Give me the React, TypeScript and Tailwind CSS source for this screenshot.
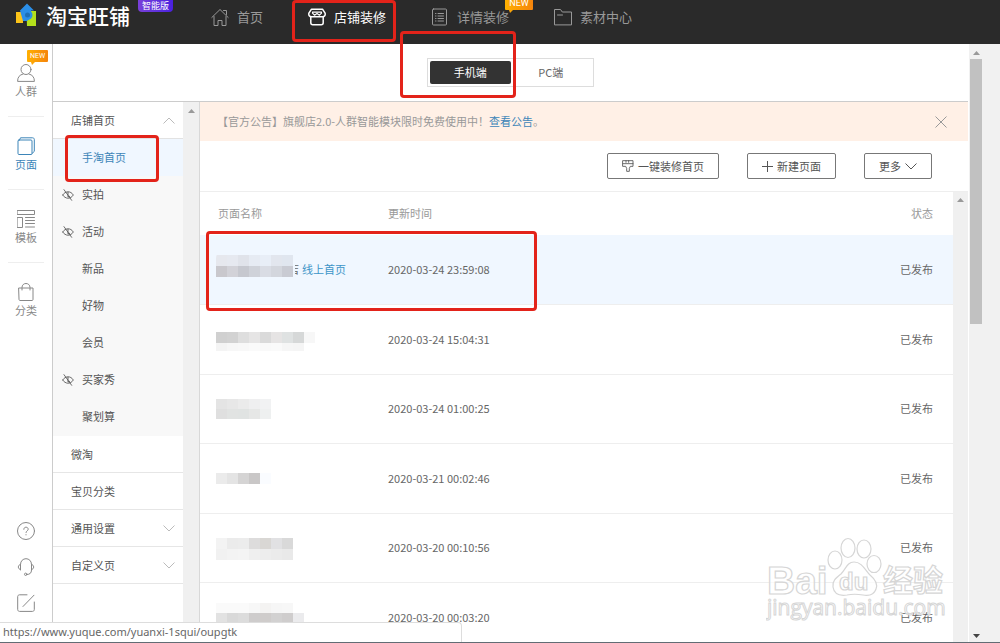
import type { ReactNode } from "react";
import clsx from "clsx";

const navItems = [
  { label: "首页", icon: <HomeIcon /> },
  { label: "店铺装修", icon: <ShopIcon />, active: true },
  { label: "详情装修", icon: <DetailIcon />, isNew: true },
  { label: "素材中心", icon: <FolderIcon /> },
];

const railItems = [
  { label: "人群", icon: <PersonIcon />, isNew: true },
  { label: "页面", icon: <PageIcon />, active: true },
  { label: "模板", icon: <TemplateIcon /> },
  { label: "分类", icon: <BagIcon /> },
];

const subPages = [
  { label: "手淘首页", active: true },
  { label: "实拍", hidden: true },
  { label: "活动", hidden: true },
  { label: "新品" },
  { label: "好物" },
  { label: "会员" },
  { label: "买家秀", hidden: true },
  { label: "聚划算" },
];

const sections = [
  { label: "微淘" },
  { label: "宝贝分类" },
  { label: "通用设置", expandable: true },
  { label: "自定义页", expandable: true },
];

type Band = { y: number; h: number; cells: string[] };

const rows: { time: string; bands: Band[]; home?: boolean }[] = [
  {
    time: "2020-03-24 23:59:08",
    home: true,
    bands: [
      { y: 3, h: 11, cells: ["#e6e8ee", "#e6e9f0", "#e0e3ea", "#e6ebf3", "#e8eef7", "#e2e6ee", "#e0e6ef"] },
      { y: 14, h: 11, cells: ["#c9c8cd", "#d2d2d8", "#c6c8cf", "#cfd2d9", "#d9dce4", "#d3d6dd", "#c9cbd3"] },
    ],
  },
  {
    time: "2020-03-24 15:04:31",
    bands: [
      { y: 10, h: 11, cells: ["#d0d0d0", "#d2d2d2", "#dedede", "#e6e5e5", "#dadada", "#e6e4e4", "#dfe2e2", "#d6d8d8", "#f7f7f7"] },
      { y: 21, h: 8, cells: ["#f4f4f4", "#f7f7f7", "#f8f8f8", "#fafafa", "#f9f9f9", "#fafafa", "#f6f6f6", "#f5f5f5"] },
    ],
  },
  {
    time: "2020-03-24 01:00:25",
    bands: [
      { y: 7, h: 10, cells: ["#e4e4e4", "#e7e7e7", "#ebebeb", "#efeff0", "#f1f2f3"] },
      { y: 17, h: 10, cells: ["#dfdfdf", "#e1e3e2", "#e0e3e2", "#e6e7e6", "#eef0f0"] },
    ],
  },
  {
    time: "2020-03-21 00:02:46",
    bands: [{ y: 12, h: 11, cells: ["#ebebeb", "#e4e4e4", "#d5d4d4", "#c9c7c7", "#fafcff"] }],
  },
  {
    time: "2020-03-20 00:10:56",
    bands: [
      { y: 7, h: 11, cells: ["#f3f3f3", "#ebebeb", "#ececec", "#dddcdc", "#d9d7d4", "#e1e1e3", "#d9d9d9"] },
      { y: 18, h: 11, cells: ["#f1f1f1", "#f3f3f3", "#f4f4f4", "#efefef", "#ededed", "#ebebeb", "#e9e9e9"] },
    ],
  },
  {
    time: "2020-03-20 00:03:20",
    bands: [
      { y: 3, h: 10, cells: ["#fafafa", "#fafafa", "#fafafa", "#f7f7f7", "#f4f3f2", "#f6f6f6", "#f7f7f7"] },
      { y: 13, h: 11, cells: ["#e2e2e2", "#d9d9d9", "#dcdcdc", "#cecccc", "#cfcccb", "#d2d1d1", "#cfcdcd", "#ebebed"] },
    ],
  },
];

function Icon({ children, size = 18 }: { children: ReactNode; size?: number }) {
  return (
    <svg
      width={size}
      height={size}
      viewBox="0 0 18 18"
      fill="none"
      stroke="currentColor"
      strokeWidth="1"
      strokeLinecap="round"
      strokeLinejoin="round"
      className="shrink-0"
      aria-hidden="true"
    >
      {children}
    </svg>
  );
}

function HomeIcon() {
  return (
    <Icon>
      <path d="M.8 9.500 9 1.500l8.200 8M3 8.500V17.500h4v-5h4v5h4v-9M12.500 2.500h3v4" />
    </Icon>
  );
}

function ShopIcon() {
  return (
    <Icon>
      <g strokeWidth="1.500">
        <path d="M3.500 1.200h11l2.600 4c.5 2-.6 3.600-2.600 3.600h-11C1.500 8.800.4 7.200.9 5.200z" />
        <path d="M4.500 4.200h9M4.500 5.200l2 2 2.500-1.800 2.500 1.800 2-2" strokeWidth="1.200" />
        <path d="M2.800 9v5.700c0 1.200.8 2 2 2h8.400c1.200 0 2-.8 2-2V9" />
      </g>
    </Icon>
  );
}

function DetailIcon() {
  return (
    <Icon>
      <rect x="1.500" y="1" width="14" height="16" rx="1" />
      <path d="M4.500 5.500h.5M7 5.500h5.500M4.500 8h.5M7 8h5.500M4.500 10.500h.5M7 10.500h5.500M4.500 13h.5M7 13h5.500" />
    </Icon>
  );
}

function FolderIcon() {
  return (
    <Icon>
      <path d="M.5 16.500v-15h6l1.800 2.500h9.200v12.500zM3.500 7h5" />
    </Icon>
  );
}

function PersonIcon() {
  return (
    <Icon>
      <circle cx="9" cy="5.500" r="5" />
      <path d="M6 10C2.500 11 .6 13 .6 17.400h16.800C17.400 13 15.500 11 12 10" />
    </Icon>
  );
}

function PageIcon() {
  return (
    <Icon>
      <rect x="1" y="3" width="14" height="14.500" rx="1" />
      <path d="M2.500 3 3.500.8h12c1 0 1.800.6 1.800 1.600v12L15 16.500" />
    </Icon>
  );
}

function TemplateIcon() {
  return (
    <Icon>
      <path d="M.5.500h17v4H.5zM.5 7.500h5v10h-5zM8.500 7.500h9M8.500 10.500h9M8.500 13.500h9M8.500 17h9" />
    </Icon>
  );
}

function BagIcon() {
  return (
    <Icon>
      <path d="M2 5h14v11.500c0 .6-.4 1-1 1H3c-.6 0-1-.4-1-1zM5 7V4.500C5 2 6.800.5 9 .5s4 1.500 4 4V7" />
    </Icon>
  );
}

function HelpIcon() {
  return (
    <Icon>
      <circle cx="9" cy="9" r="8.500" />
      <path d="M6.800 7.300c0-1.300 1-2.100 2.200-2.100s2.200.8 2.200 2c0 1.600-2.200 1.700-2.200 3.300M9 12.600v.3" />
    </Icon>
  );
}

function HeadsetIcon() {
  return (
    <Icon>
      <path d="M3.500 12V6.500C3.500 3 6 .7 9 .7s5.500 2.300 5.500 5.800V12c0 3-1.700 4.500-4.500 4.500" />
      <path d="M3.500 6.500C.5 6.500.5 11.500 3.500 11.500M14.500 6.500c3 0 3 5 0 5" />
      <circle cx="8.700" cy="16.300" r="1.200" />
    </Icon>
  );
}

function EditIcon() {
  return (
    <Icon>
      <path d="M10 .8H2.500c-1 0-1.800.8-1.800 1.800v13c0 1 .8 1.800 1.800 1.800h13c1 0 1.800-.8 1.800-1.800V8M6 12.500 17 1.200" />
    </Icon>
  );
}

function EyeOffIcon() {
  return (
    <Icon size={12}>
      <g strokeWidth="1.300">
        <path d="M1 9c4-6.500 12-6.500 16 0-4 6.500-12 6.500-16 0M3 1l11.500 16" />
        <path d="M9 5v7l2.500-1" />
      </g>
    </Icon>
  );
}

function BrushIcon() {
  return (
    <Icon size={12}>
      <path d="M1.500 1h15v8.500h-4L11 12.500V17H7v-4.500L5.500 9.500h-4zM1.500 5.500h15M6 1v2.500M10 1v2.500" strokeWidth="1.300" />
    </Icon>
  );
}

function Chevron({ up }: { up?: boolean }) {
  return (
    <svg width="12" height="7" viewBox="0 0 12 7" fill="none" stroke="currentColor" aria-hidden="true">
      <path d={up ? "M.5 6.500 6 1l5.500 5.500" : "M.5.500 6 6 11.500.500"} />
    </svg>
  );
}

function Arrow({ down, className }: { down?: boolean; className?: string }) {
  return (
    <svg width="7" height="4" viewBox="0 0 7 4" fill="currentColor" className={className} aria-hidden="true">
      <path d={down ? "M0 0h7L3.500 4z" : "M0 4h7L3.500 0z"} />
    </svg>
  );
}

function NewBadge({ className }: { className: string }) {
  return (
    <span
      className={clsx(
        "absolute flex items-center justify-center rounded-[1px] bg-linear-to-r from-[#ffb000] to-[#f5840c] font-[Roboto] text-white",
        className,
      )}
    >
      NEW
      <svg width="4" height="3" viewBox="0 0 4 3" className="absolute top-full left-1" aria-hidden="true">
        <path d="M0 0h4L1 3z" fill="#fba508" />
      </svg>
    </span>
  );
}

function Mark({ className }: { className: string }) {
  return (
    <span
      className={clsx("pointer-events-none absolute z-10 rounded border-3 border-[#e3231a]", className)}
      aria-hidden="true"
    />
  );
}

function Logo() {
  return (
    <svg width="22" height="24" viewBox="0 0 22 24" aria-hidden="true">
      <path d="M0 9h7v11H0z" fill="#fcc419" />
      <path d="M10.500 8H20v15h-9z" fill="#b4e01c" />
      <path d="M4 7.500 11 .500l7 7H15v7L11 18H7z" fill="#2b8fe8" />
      <circle cx="11.500" cy="12" r="5" fill="#2b8fe8" />
      <circle cx="11.500" cy="12" r="2.500" fill="#1f6fb5" />
    </svg>
  );
}

function Mosaic({ bands }: { bands: Band[] }) {
  return (
    <svg width="100" height="34" viewBox="0 0 100 34" shapeRendering="crispEdges" aria-hidden="true">
      {bands.map((band) =>
        band.cells.map((fill, i) => (
          <rect key={`${band.y}-${i}`} x={i * 11} y={band.y} width="11" height={band.h} fill={fill} />
        )),
      )}
    </svg>
  );
}

function Watermark() {
  return (
    <svg
      width="180"
      height="90"
      viewBox="0 0 180 90"
      className="pointer-events-none absolute right-[22px] bottom-4"
      fill="#ffffff"
      fillOpacity="0.700"
      stroke="#d6d6d6"
      strokeWidth="1.200"
      aria-hidden="true"
    >
      <ellipse cx="69" cy="24" rx="7" ry="9" />
      <ellipse cx="82" cy="12" rx="7" ry="9.500" />
      <ellipse cx="98" cy="13" rx="7" ry="9" />
      <ellipse cx="108" cy="28" rx="7" ry="8.500" />
      <path d="M88 26c8 0 11 8 16 13 6 5 8 9 6 14-2 6-8 7-13 6-6-1-11-1-16 0-7 1-13-1-14-8-1-6 3-9 8-13 5-5 6-12 13-12z" />
      <g className="font-['Liberation_Sans'] font-bold">
        <text x="1" y="58" fontSize="39">Bai</text>
        <text x="73" y="54" fontSize="24">du</text>
      </g>
      <text x="117" y="55" fontSize="30" className="font-['Noto_Sans_CJK_SC'] font-bold">经验</text>
      <text x="1" y="79" fontSize="21" strokeWidth="1" className="font-['Open_Sans']">jingyan.baidu.com</text>
    </svg>
  );
}

function Header() {
  return (
    <header className="flex h-11 shrink-0 items-start bg-[#2a2a2a] pl-4 text-[#999]">
      <div className="flex w-[195px] shrink-0 items-center">
        <Logo />
        <span className="ml-2 text-[21px] leading-[30px] font-medium text-white">淘宝旺铺</span>
        <span className="ml-2 flex h-3 w-[35px] items-center justify-center self-start rounded-b-sm bg-linear-to-r from-[#7a3fd8] to-[#4a1fe0] text-[9px] text-white">
          智能版
        </span>
      </div>
      <nav className="flex gap-[45px]">
        {navItems.map((item) => (
          <a
            key={item.label}
            href="#"
            className={clsx(
              "relative flex h-[34px] items-center gap-2 text-[13px] whitespace-nowrap",
              item.active && "text-white",
            )}
          >
            {item.icon}
            {item.label}
            {item.isNew && <NewBadge className="-top-0.5 -right-6 h-3 w-7 text-[9px]" />}
            {item.active && <Mark className="top-0 -right-2.5 -bottom-2 -left-4" />}
          </a>
        ))}
      </nav>
    </header>
  );
}

function Rail() {
  return (
    <aside className="flex w-[53px] shrink-0 flex-col items-center border-r border-[#ccc] text-[11px] text-[#888]">
      {railItems.map((item) => (
        <a
          key={item.label}
          href="#"
          className={clsx(
            "relative flex w-9 flex-col items-center border-b border-[#eee] pt-5 pb-4 leading-[18px] last-of-type:border-0",
            item.active && "text-[#3d85b8]",
          )}
        >
          {item.icon}
          {item.label}
          {item.isNew && <NewBadge className="top-1.5 -right-1 h-3 w-[21px] text-[7px]" />}
        </a>
      ))}
      <div className="mt-auto flex flex-col gap-[18px] pb-[30px]">
        <button type="button" aria-label="帮助"><HelpIcon /></button>
        <button type="button" aria-label="客服"><HeadsetIcon /></button>
        <button type="button" aria-label="反馈"><EditIcon /></button>
      </div>
    </aside>
  );
}

function PageTree() {
  return (
    <div className="flex shrink-0 border-r border-[#d8d8d8]">
      <nav className="w-[130px] text-[11px] text-[#555]">
        <button
          type="button"
          className="flex h-[37px] w-full items-center justify-between border-b border-[#e2e2e2] pr-2 pl-[18px]"
        >
          店铺首页
          <span className="text-[#bbb]"><Chevron up /></span>
        </button>
        <ul className="bg-[#f8f8f8] pb-px">
          {subPages.map((page) => (
            <li key={page.label} className="relative">
              <a
                href="#"
                className={clsx("flex h-[37px] items-center pl-[9px]", page.active && "bg-[#f0f7ff] text-[#3d85b8]")}
              >
                <span className="flex w-5">{page.hidden && <EyeOffIcon />}</span>
                {page.label}
              </a>
              {page.active && <Mark className="-top-1 right-6 -bottom-1.5 left-3" />}
            </li>
          ))}
        </ul>
        {sections.map((section) => (
          <button
            key={section.label}
            type="button"
            className="flex h-[37px] w-full items-center justify-between border-b border-[#e6e6e6] pr-2 pl-[18px]"
          >
            {section.label}
            {section.expandable && <span className="text-[#bbb]"><Chevron /></span>}
          </button>
        ))}
      </nav>
      <div className="flex w-4 justify-center bg-[#f0f0f0] pt-[7px] text-[#999]">
        <Arrow />
      </div>
    </div>
  );
}

function PageList() {
  return (
    <div className="flex min-h-0 flex-1 border-t border-[#eee]">
      <div className="min-w-0 flex-1 overflow-hidden">
        <table className="w-full text-left text-[11px] text-[#666]">
          <thead>
            <tr className="h-[43px] text-[#999]">
              <th className="w-[188px] pl-[18px] font-normal">页面名称</th>
              <th className="font-normal">更新时间</th>
              <th className="pr-5 text-right font-normal">状态</th>
            </tr>
          </thead>
          <tbody>
            {rows.map((row) => (
              <tr
                key={row.time}
                className={clsx("border-b border-[#eee] odd:h-[69px] even:h-[70px]", row.home && "bg-[#f0f7ff]")}
              >
                <td className="relative pl-4">
                  <div className="flex items-center">
                    <div className={clsx("overflow-hidden", row.home ? "w-[78px] rounded-md" : "w-[100px]")}>
                      <Mosaic bands={row.bands} />
                    </div>
                    {row.home && (
                      <>
                        <span className="ml-px flex w-1 justify-end overflow-hidden">店</span>
                        <a href="#" className="ml-[3px] whitespace-nowrap text-[#3d95c8]">线上首页</a>
                        <Mark className="-top-1 -bottom-[7px] left-1.5 w-[331px]" />
                      </>
                    )}
                  </div>
                </td>
                <td>{row.time}</td>
                <td className="pr-5 text-right">已发布</td>
              </tr>
            ))}
          </tbody>
        </table>
      </div>
      <div className="flex w-[15px] shrink-0 justify-center bg-[#f0f0f0] pt-1.5 text-[#999]">
        <Arrow />
      </div>
    </div>
  );
}

export default function App() {
  const outlined = "flex h-[26px] items-center gap-1 rounded-xs border border-[#777] px-3.5";

  return (
    <div className="relative flex h-screen flex-col overflow-hidden border-b border-[#626c74] bg-white font-['Noto_Sans_CJK_SC',sans-serif]">
      <Header />
      <div className="flex min-h-0 flex-1">
        <Rail />
        <div className="flex min-w-0 flex-1 flex-col">
          <div className="flex h-[58px] shrink-0 items-center justify-center border-b border-[#ccc]">
            <div className="relative flex h-[29px] w-[167px] border border-[#ddd] p-0.5 text-[11px] text-[#666]">
              <button type="button" className="flex-1 rounded-xs bg-[#333] text-white">手机端</button>
              <button type="button" className="flex-1">PC端</button>
              <Mark className="-top-7 right-[77px] -bottom-3 -left-7" />
            </div>
          </div>
          <div className="flex min-h-0 flex-1">
            <PageTree />
            <main className="relative flex min-w-0 flex-1 flex-col">
              <div className="flex h-[39px] shrink-0 items-center justify-between bg-[#fff0e6] pr-[21px] pl-[17px] text-[11px] text-[#999]">
                <p>
                  【官方公告】旗舰店2.0-人群智能模块限时免费使用中！
                  <a href="#" className="text-[#3d85b8]">查看公告</a>。
                </p>
                <button type="button" aria-label="关闭">
                  <svg width="12" height="12" viewBox="0 0 12 12" stroke="currentColor" aria-hidden="true">
                    <path d="M.5.500l11 11M11.500.500l-11 11" />
                  </svg>
                </button>
              </div>
              <div className="flex h-[50px] shrink-0 items-center justify-end gap-7 pr-9 text-[11px] text-[#555]">
                <button type="button" className={outlined}>
                  <BrushIcon />
                  一键装修首页
                </button>
                <button type="button" className={outlined}>
                  <svg width="11" height="11" viewBox="0 0 11 11" stroke="currentColor" aria-hidden="true">
                    <path d="M5.500 0v11M0 5.500h11" />
                  </svg>
                  新建页面
                </button>
                <button type="button" className={outlined}>
                  更多
                  <Chevron />
                </button>
              </div>
              <PageList />
              <Watermark />
            </main>
          </div>
        </div>
        <div className="flex w-8 shrink-0 flex-col items-start border-l border-white bg-[#f1f1f1] pt-[7px] pb-1 pl-px">
          <Arrow className="ml-[3px] text-[#999]" />
          <div className="mt-1 h-[265px] w-3 bg-[#c1c1c1]" />
          <Arrow down className="mt-auto ml-[3px] text-[#444]" />
        </div>
      </div>
      <div className="absolute bottom-0 left-0 z-20 h-5 w-[462px] rounded-tr border-t border-r border-[#ddd] bg-white pl-[3px] font-['Noto_Sans',sans-serif] text-[11px] leading-[18px] text-[#666]">
        https://www.yuque.com/yuanxi-1squi/oupgtk
      </div>
    </div>
  );
}
